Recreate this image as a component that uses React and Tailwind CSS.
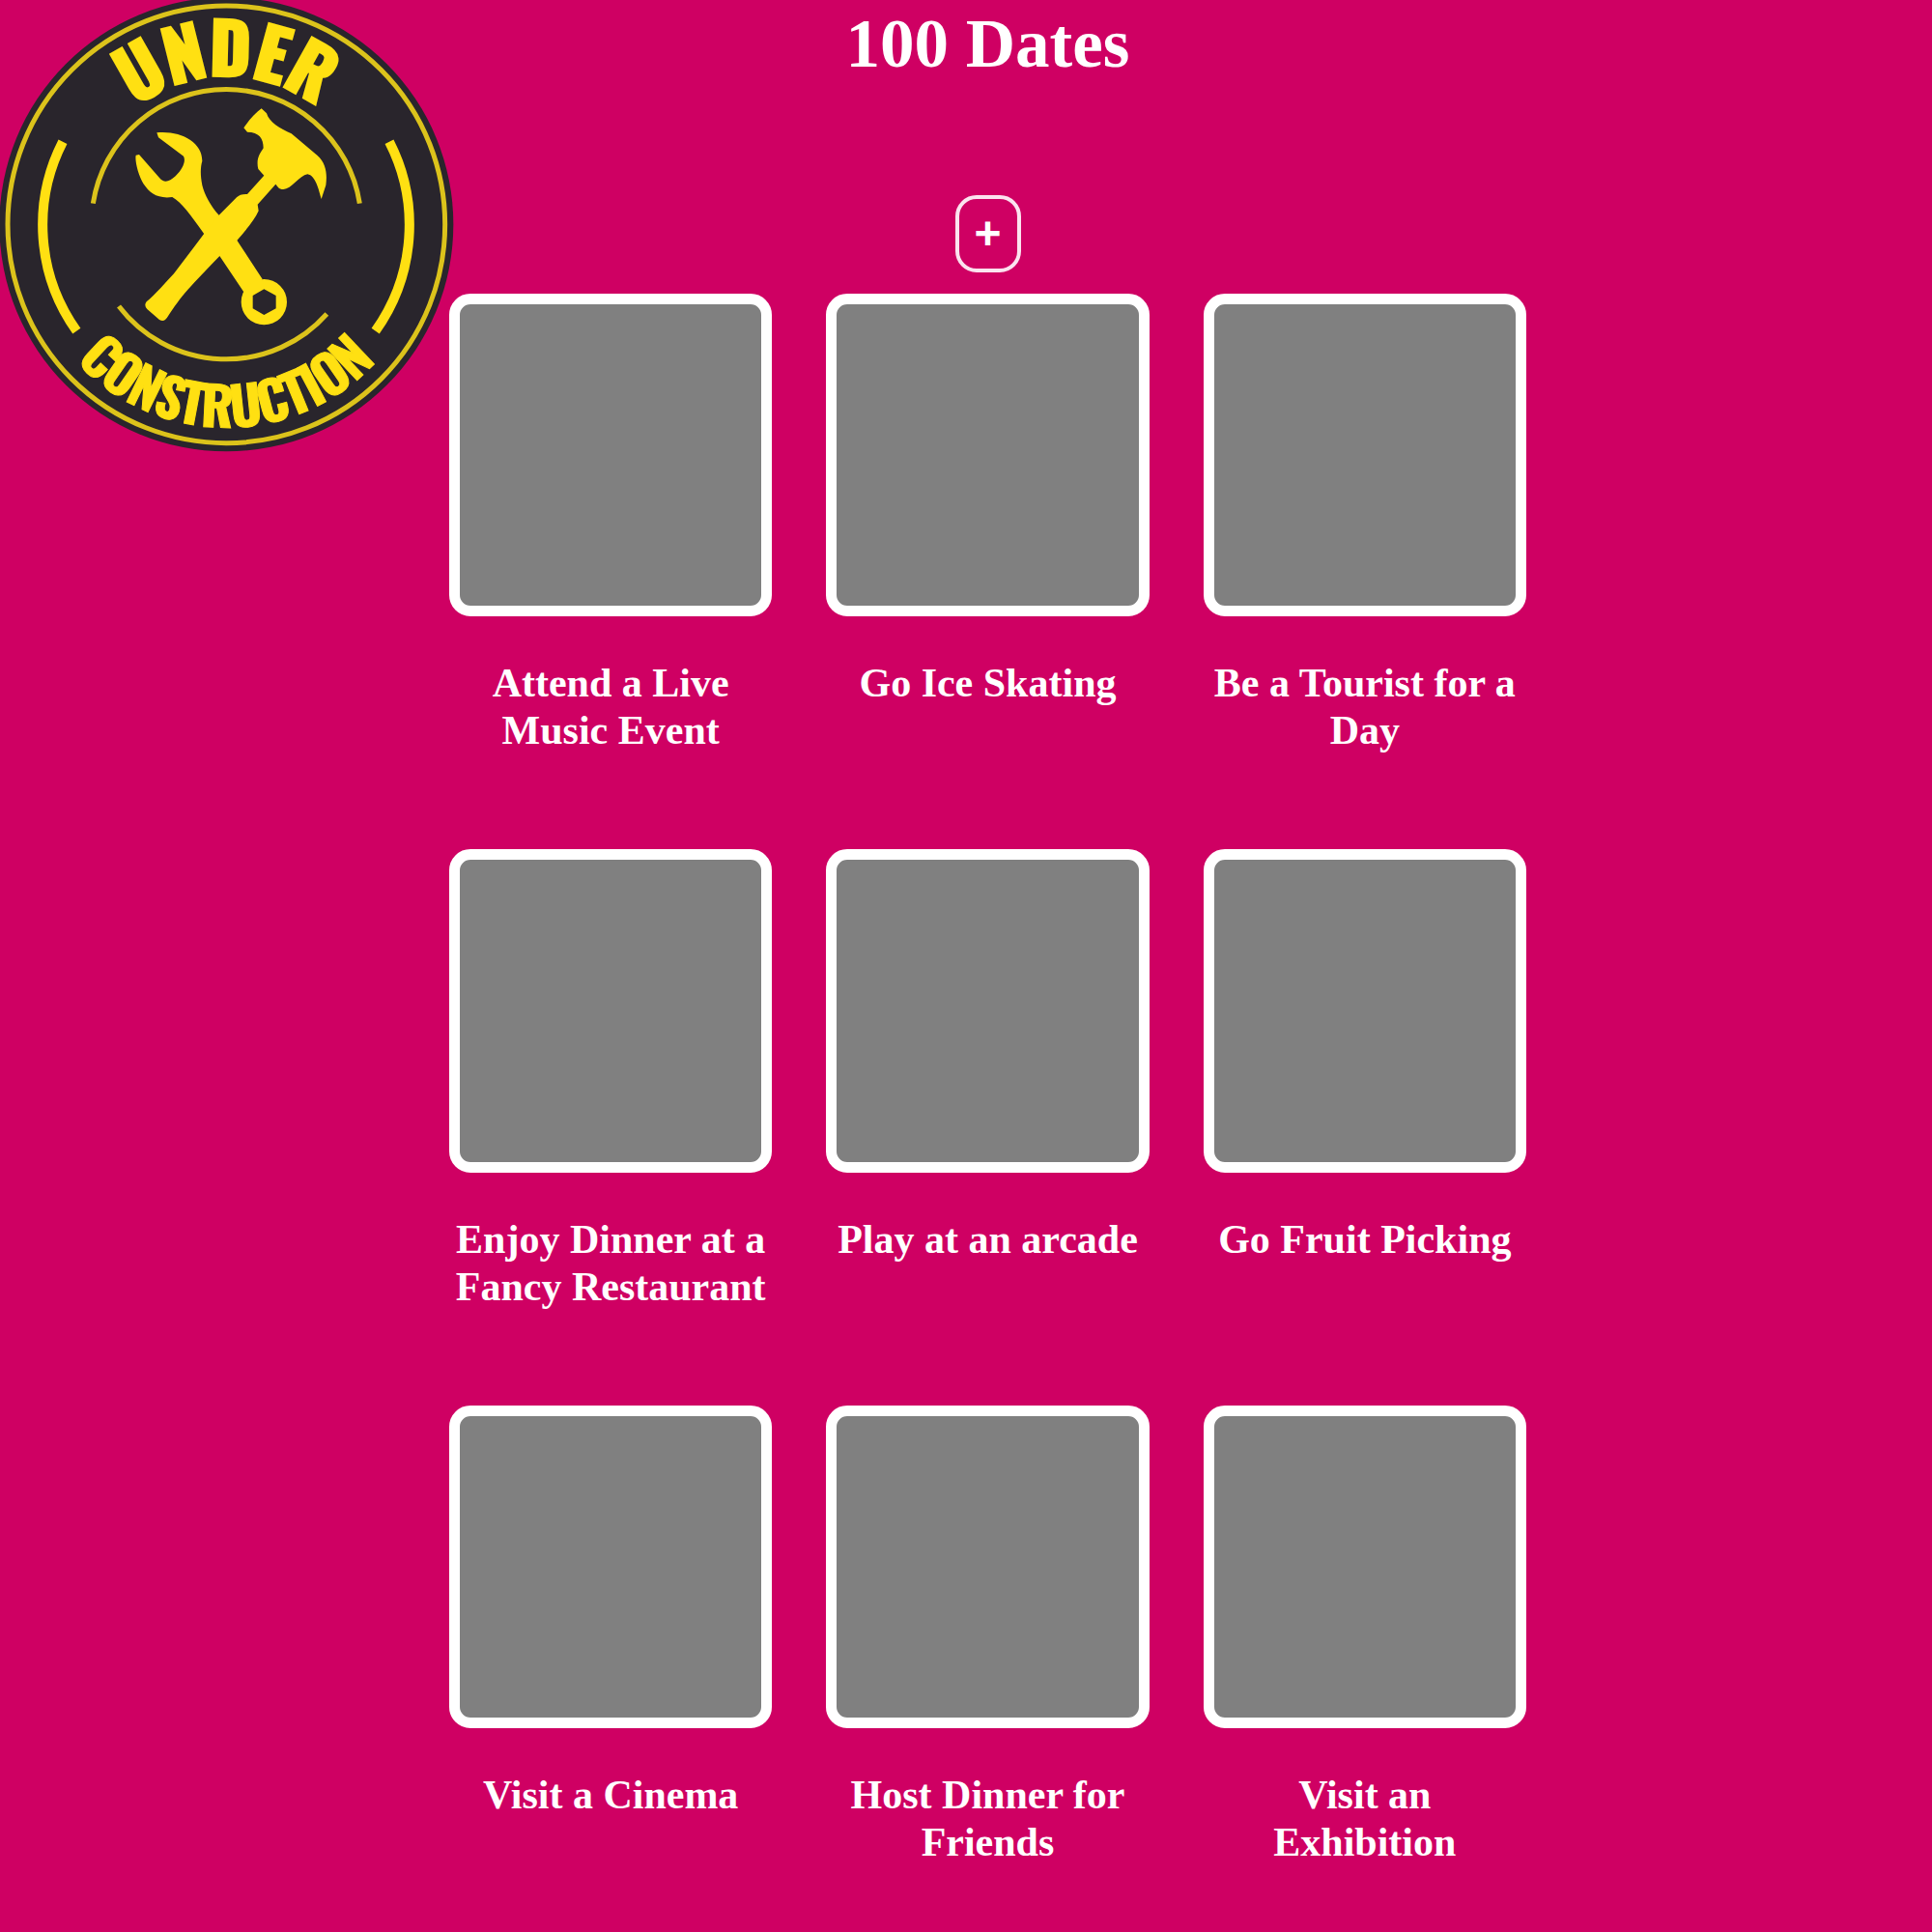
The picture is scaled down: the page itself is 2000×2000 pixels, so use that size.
const dates = [
  "Attend a Live Music Event",
  "Go Ice Skating",
  "Be a Tourist for a Day",
  "Enjoy Dinner at a Fancy Restaurant",
  "Play at an arcade",
  "Go Fruit Picking",
  "Visit a Cinema",
  "Host Dinner for Friends",
  "Visit an Exhibition",
];

function ConstructionBadge() {
  return (
    <svg
      viewBox="0 0 1410 1410"
      role="img"
      aria-label="Under construction"
      className="absolute top-0 left-0 w-[470px] h-[470px]"
    >
      <defs>
        <path id="arc-top" d="M 242 697 A 461 461 0 0 1 1164 697" />
        <path id="arc-bottom" d="M 72 697 A 631 631 0 0 0 1334 697" />
      </defs>
      <circle cx="703" cy="697" r="705" fill="#29252c" />
      <g fill="none" stroke="#dcc31b">
        <circle cx="703" cy="697" r="679" strokeWidth="15" />
        <path d="M 289 632 A 419 419 0 0 1 1117 632" strokeWidth="15" />
        <path d="M 369 951 A 419 419 0 0 0 1015 975" strokeWidth="15" />
      </g>
      <g fill="none" stroke="#ffe012" strokeWidth="30">
        <path d="M 195 440 A 567 567 0 0 0 238 1028" />
        <path d="M 1209 440 A 567 567 0 0 1 1166 1028" />
      </g>
      <g
        fill="#ffe012"
        stroke="#ffe012"
        textAnchor="middle"
        className="font-bold font-['Oswald','Roboto_Condensed','Liberation_Sans',sans-serif]"
      >
        <text fontSize="216" strokeWidth="9">
          <textPath href="#arc-top" startOffset="50%">UNDER</textPath>
        </text>
        <text fontSize="166" strokeWidth="3">
          <textPath href="#arc-bottom" startOffset="50%">CONSTRUCTION</textPath>
        </text>
      </g>
      <g fill="#ffe012">
        <path d="M 487 412 C 560 405 628 440 628 500 C 622 520 622 545 628 575 C 635 605 655 640 680 668 L 735 745 L 815 867 L 757 907 L 682 795 L 633 725 C 590 665 565 630 535 612 C 490 618 465 600 445 570 C 430 545 418 500 422 482 L 432 480 L 495 552 C 510 570 525 565 545 547 C 568 525 578 500 570 485 L 492 427 Z" />
        <path d="M 812 337 L 828 352 C 835 378 870 400 905 415 L 985 482 C 1015 508 1016 545 1012 575 L 998 618 C 990 590 980 545 955 541 C 930 545 905 588 880 588 C 865 588 862 578 856 572 L 800 635 L 803 655 C 790 685 760 718 735 748 L 680 797 C 600 880 560 920 520 985 Q 510 1002 495 993 L 457 960 Q 446 948 455 937 C 480 918 520 870 540 850 L 633 727 L 680 668 L 735 613 Q 745 602 768 603 L 820 545 L 802 525 C 795 495 805 480 818 460 C 818 430 805 410 768 410 L 757 397 C 775 370 795 350 812 337 Z" />
        <path
          fillRule="evenodd"
          d="M 820 867 A 71 71 0 1 1 820 1009 A 71 71 0 1 1 820 867 Z M 820 898 L 857 918 L 857 958 L 820 978 L 785 958 L 785 918 Z"
        />
      </g>
    </svg>
  );
}

export default function App() {
  return (
    <div className="relative min-h-screen bg-[#cf0063] text-white font-['Liberation_Serif',serif]">
      <ConstructionBadge />
      <main className="flex flex-col items-center pt-[5px] pb-16 pl-[45px]">
        <h1 className="text-[71px] leading-[80px] font-bold">100 Dates</h1>
        <button
          type="button"
          aria-label="Add date"
          className="mt-[117px] flex h-20 w-[68px] items-center justify-center rounded-[22px] border-4 border-[#fbe3ef] font-['Liberation_Sans',sans-serif] text-5xl font-bold"
        >
          +
        </button>
        <ul className="relative mt-[22px] grid w-full max-w-[1115px] grid-cols-3 gap-x-14 gap-y-[98px]">
          {dates.map((date) => (
            <li key={date} className="flex flex-col gap-[45px]">
              <div className="aspect-square rounded-[22px] border-[11px] border-white bg-[#808080]" />
              <h2 className="text-center text-[42px] leading-[49px] font-bold">{date}</h2>
            </li>
          ))}
        </ul>
      </main>
    </div>
  );
}
